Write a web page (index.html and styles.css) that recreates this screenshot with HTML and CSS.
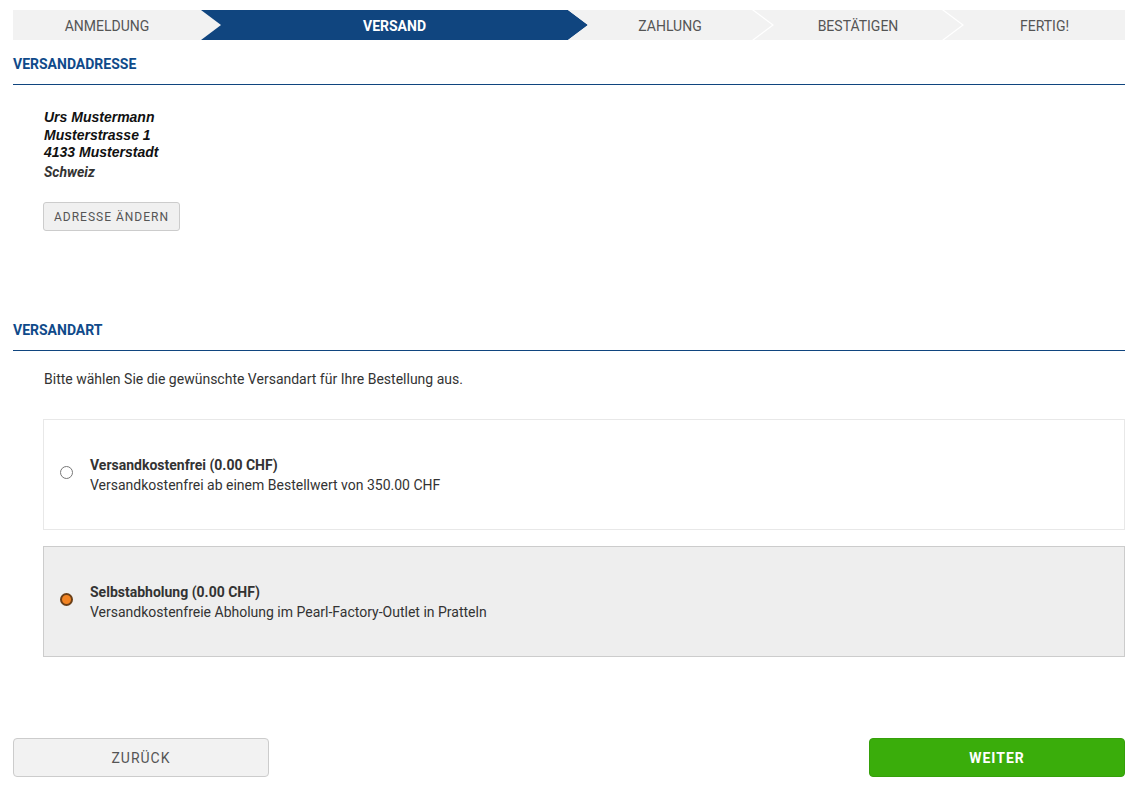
FILE: index.html
```html
<!DOCTYPE html>
<html lang="de">
<head>
    <meta charset="UTF-8">
    <title>Kasse - Versand</title>
    <link rel="stylesheet" href="styles.css">
</head>
<body>
    <div class="steps">
        <div class="step first">Anmeldung</div>
        <div class="step active">Versand</div>
        <div class="step after-active">Zahlung</div>
        <div class="step">Bestätigen</div>
        <div class="step last">Fertig!</div>
    </div>

    <h2 class="section-title">Versandadresse</h2>
    <div class="address">
        <div>Urs Mustermann</div>
        <div>Musterstrasse 1</div>
        <div>4133 Musterstadt</div>
        <div class="country">Schweiz</div>
    </div>
    <button class="btn-small">Adresse ändern</button>

    <h2 class="section-title second">Versandart</h2>
    <p class="intro">Bitte wählen Sie die gewünschte Versandart für Ihre Bestellung aus.</p>

    <label class="option">
        <input type="radio" name="shipping">
        <span class="option-text">
            <strong>Versandkostenfrei (0.00 CHF)</strong>
            <span>Versandkostenfrei ab einem Bestellwert von 350.00 CHF</span>
        </span>
    </label>
    <label class="option selected">
        <input type="radio" name="shipping" checked>
        <span class="option-text">
            <strong>Selbstabholung (0.00 CHF)</strong>
            <span>Versandkostenfreie Abholung im Pearl-Factory-Outlet in Pratteln</span>
        </span>
    </label>

    <div class="actions">
        <button class="btn back">Zurück</button>
        <button class="btn next">Weiter</button>
    </div>
</body>
</html>
```

FILE: styles.css
```css
body {
    font-family: Roboto, "Liberation Sans", Arial, sans-serif;
    margin: 0;
    padding: 10px 18px 0 13px;
    color: #333;
    font-size: 14px;
}
.steps {
    display: flex;
    height: 30px;
}
.step {
    height: 30px;
    line-height: 32px;
    text-align: center;
    text-transform: uppercase;
    font-size: 14px;
    color: #555;
    background: #f2f2f2;
    padding: 0 20px;
    margin-left: -18px;
    clip-path: polygon(0 0, calc(100% - 20px) 0, 100% 50%, calc(100% - 20px) 100%, 0 100%, 20px 50%);
    box-sizing: border-box;
    flex: 0 0 auto;
}
.step.first {
    margin-left: 0;
    padding-left: 0;
    width: 208px;
    clip-path: polygon(0 0, calc(100% - 20px) 0, 100% 50%, calc(100% - 20px) 100%, 0 100%);
}
.step.active {
    margin-left: -20px;
    width: 387px;
    background: #10457f;
    color: #fff;
    font-weight: bold;
}
.step.after-active {
    margin-left: -20px;
    width: 204px;
}
.step:nth-child(4) {
    width: 208px;
}
.step.last {
    width: 181px;
    padding-right: 0;
    clip-path: polygon(0 0, 100% 0, 100% 100%, 0 100%, 20px 50%);
}
.section-title {
    margin: 16px 0 0;
    font-size: 14px;
    line-height: 16px;
    font-weight: bold;
    text-transform: uppercase;
    color: #0f4a8a;
    padding-bottom: 12px;
    border-bottom: 1px solid #10457f;
}
.section-title.second {
    margin-top: 91px;
}
.address {
    margin: 24px 0 0 31px;
    font-family: "Liberation Sans", Arial, sans-serif;
    font-style: italic;
    font-weight: bold;
    font-size: 14px;
    line-height: 17.5px;
    color: #111;
}
.address .country {
    font-family: Roboto, sans-serif;
    font-size: 14px;
    margin-top: 2px;
    color: #333;
}
.btn-small {
    display: block;
    margin: 21px 0 0 30px;
    height: 29px;
    padding: 0 10px;
    font-family: inherit;
    font-size: 12px;
    letter-spacing: 1px;
    text-transform: uppercase;
    color: #555;
    background: #f0f0f0;
    border: 1px solid #ccc;
    border-radius: 3px;
}
.intro {
    margin: 18px 0 0 31px;
    line-height: 20px;
    color: #333;
}
.option {
    display: flex;
    align-items: center;
    height: 111px;
    box-sizing: border-box;
    margin: 30px 0 0 30px;
    padding-left: 15px;
    border: 1px solid #e8e8e8;
    background: #fff;
}
.option.selected {
    margin-top: 16px;
    background: #eeeeee;
    border-color: #ccc;
}
.option input {
    appearance: none;
    width: 13px;
    height: 13px;
    margin: 0 17px 4px 1px;
    border: 1px solid #777;
    border-radius: 50%;
    background: #fff;
    flex: 0 0 auto;
}
.option input:checked {
    background: #f28322;
    border: 2px solid #6b3f17;
}
.option-text {
    display: flex;
    flex-direction: column;
    line-height: 20px;
}
.option-text strong {
    color: #333;
}
.actions {
    display: flex;
    justify-content: space-between;
    margin-top: 81px;
}
.btn {
    width: 256px;
    height: 39px;
    font-family: inherit;
    font-size: 14px;
    letter-spacing: 1px;
    text-transform: uppercase;
    border-radius: 4px;
}
.btn.back {
    background: #f2f2f2;
    color: #555;
    border: 1px solid #ccc;
}
.btn.next {
    background: #3aad0b;
    color: #fff;
    font-weight: bold;
    border: 1px solid #35a00a;
}
```
